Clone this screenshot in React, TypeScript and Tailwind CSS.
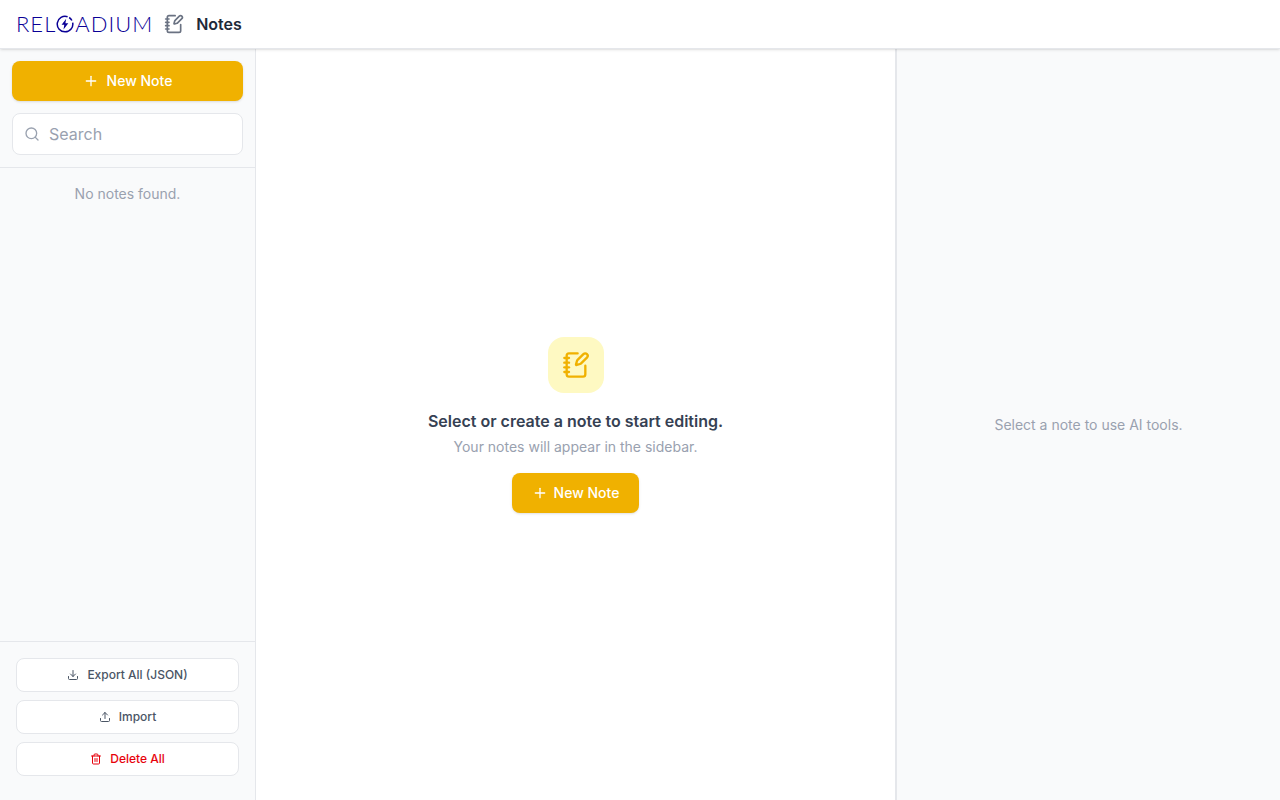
import { useState } from 'react'
import { Download, NotebookPen, Plus, Search, Trash2, Upload } from 'lucide-react'
import { clsx } from 'clsx'

interface NewNoteButtonProps {
  className?: string
}

function NewNoteButton({ className }: NewNoteButtonProps) {
  return (
    <button
      type="button"
      className={clsx(
        'flex h-10 items-center justify-center rounded-lg bg-yellow-500 text-sm font-medium text-white shadow-sm hover:bg-yellow-600',
        className
      )}
    >
      <Plus className="size-4" />
      New Note
    </button>
  )
}

function Logo() {
  return (
    <a
      href="#"
      aria-label="Reloadium"
      className="flex items-center gap-px font-['Lato',sans-serif] text-[22px] leading-6 font-light text-[#0a0096]"
    >
      <span>R</span>
      <span>E</span>
      <span>L</span>
      <svg viewBox="0 0 18 18" className="size-[18px]" fill="none" stroke="currentColor" strokeWidth="1.5">
        <path d="M11.6 1.7A7.8 7.8 0 1 0 16.7 7.6" />
        <path d="M13.2 2.5a7.8 7.8 0 0 1 2.7 3" />
        <path d="M10.2 3.8 5.6 9.7h2.7l-.8 4.7 4.8-6.2H9.4z" fill="currentColor" stroke="none" />
      </svg>
      <span>A</span>
      <span>D</span>
      <span>I</span>
      <span>U</span>
      <span>M</span>
    </a>
  )
}

const actions = [
  { label: 'Export All (JSON)', icon: Download, color: 'text-gray-600' },
  { label: 'Import', icon: Upload, color: 'text-gray-600' },
  { label: 'Delete All', icon: Trash2, color: 'text-red-600' },
]

export default function App() {
  const [query, setQuery] = useState('')

  return (
    <div className="flex h-screen flex-col bg-white font-['Inter',sans-serif] text-gray-800">
      <header className="z-10 flex h-[49px] shrink-0 items-center border-b border-gray-200 bg-white px-4 shadow-sm">
        <Logo />
        <NotebookPen className="ml-3 size-5 text-gray-500" />
        <h1 className="ml-3 text-base font-semibold">Notes</h1>
      </header>

      <div className="flex min-h-0 flex-1">
        <aside className="flex w-64 shrink-0 flex-col border-r border-gray-200 bg-gray-50">
          <div className="flex flex-col gap-3 border-b border-gray-200 p-3">
            <NewNoteButton className="w-full gap-2" />
            <label className="flex items-center gap-[9px] rounded-lg border border-gray-200 bg-white px-[11px] py-2">
              <Search className="size-4 shrink-0 text-gray-400" />
              <input
                type="text"
                aria-label="Search"
                placeholder="Search"
                value={query}
                onChange={(e) => setQuery(e.target.value)}
                className="min-w-0 flex-1 text-base outline-none placeholder:text-gray-400"
              />
            </label>
          </div>

          <div className="flex-1 overflow-y-auto p-4">
            <p className="text-center text-sm text-gray-400">No notes found.</p>
          </div>

          <div className="flex flex-col gap-2 border-t border-gray-200 px-4 pt-4 pb-6">
            {actions.map(({ label, icon: Icon, color }) => (
              <button
                key={label}
                type="button"
                className={clsx(
                  'flex items-center justify-center gap-2 rounded-lg border border-gray-200 bg-white py-2 text-xs font-medium hover:bg-gray-50',
                  color
                )}
              >
                <Icon className="size-3" />
                {label}
              </button>
            ))}
          </div>
        </aside>

        <main className="flex flex-1 flex-col items-center justify-center gap-4 border-r border-gray-200">
          <div className="flex size-14 items-center justify-center rounded-2xl bg-yellow-100">
            <NotebookPen className="size-7 text-yellow-500" />
          </div>
          <div className="flex flex-col gap-1 text-center">
            <h2 className="text-base font-semibold text-gray-700">Select or create a note to start editing.</h2>
            <p className="text-sm text-gray-400">Your notes will appear in the sidebar.</p>
          </div>
          <NewNoteButton className="gap-1.5 px-5" />
        </main>

        <aside className="flex w-96 shrink-0 items-center justify-center border-l border-gray-200 bg-gray-50">
          <p className="text-sm text-gray-400">Select a note to use AI tools.</p>
        </aside>
      </div>
    </div>
  )
}
